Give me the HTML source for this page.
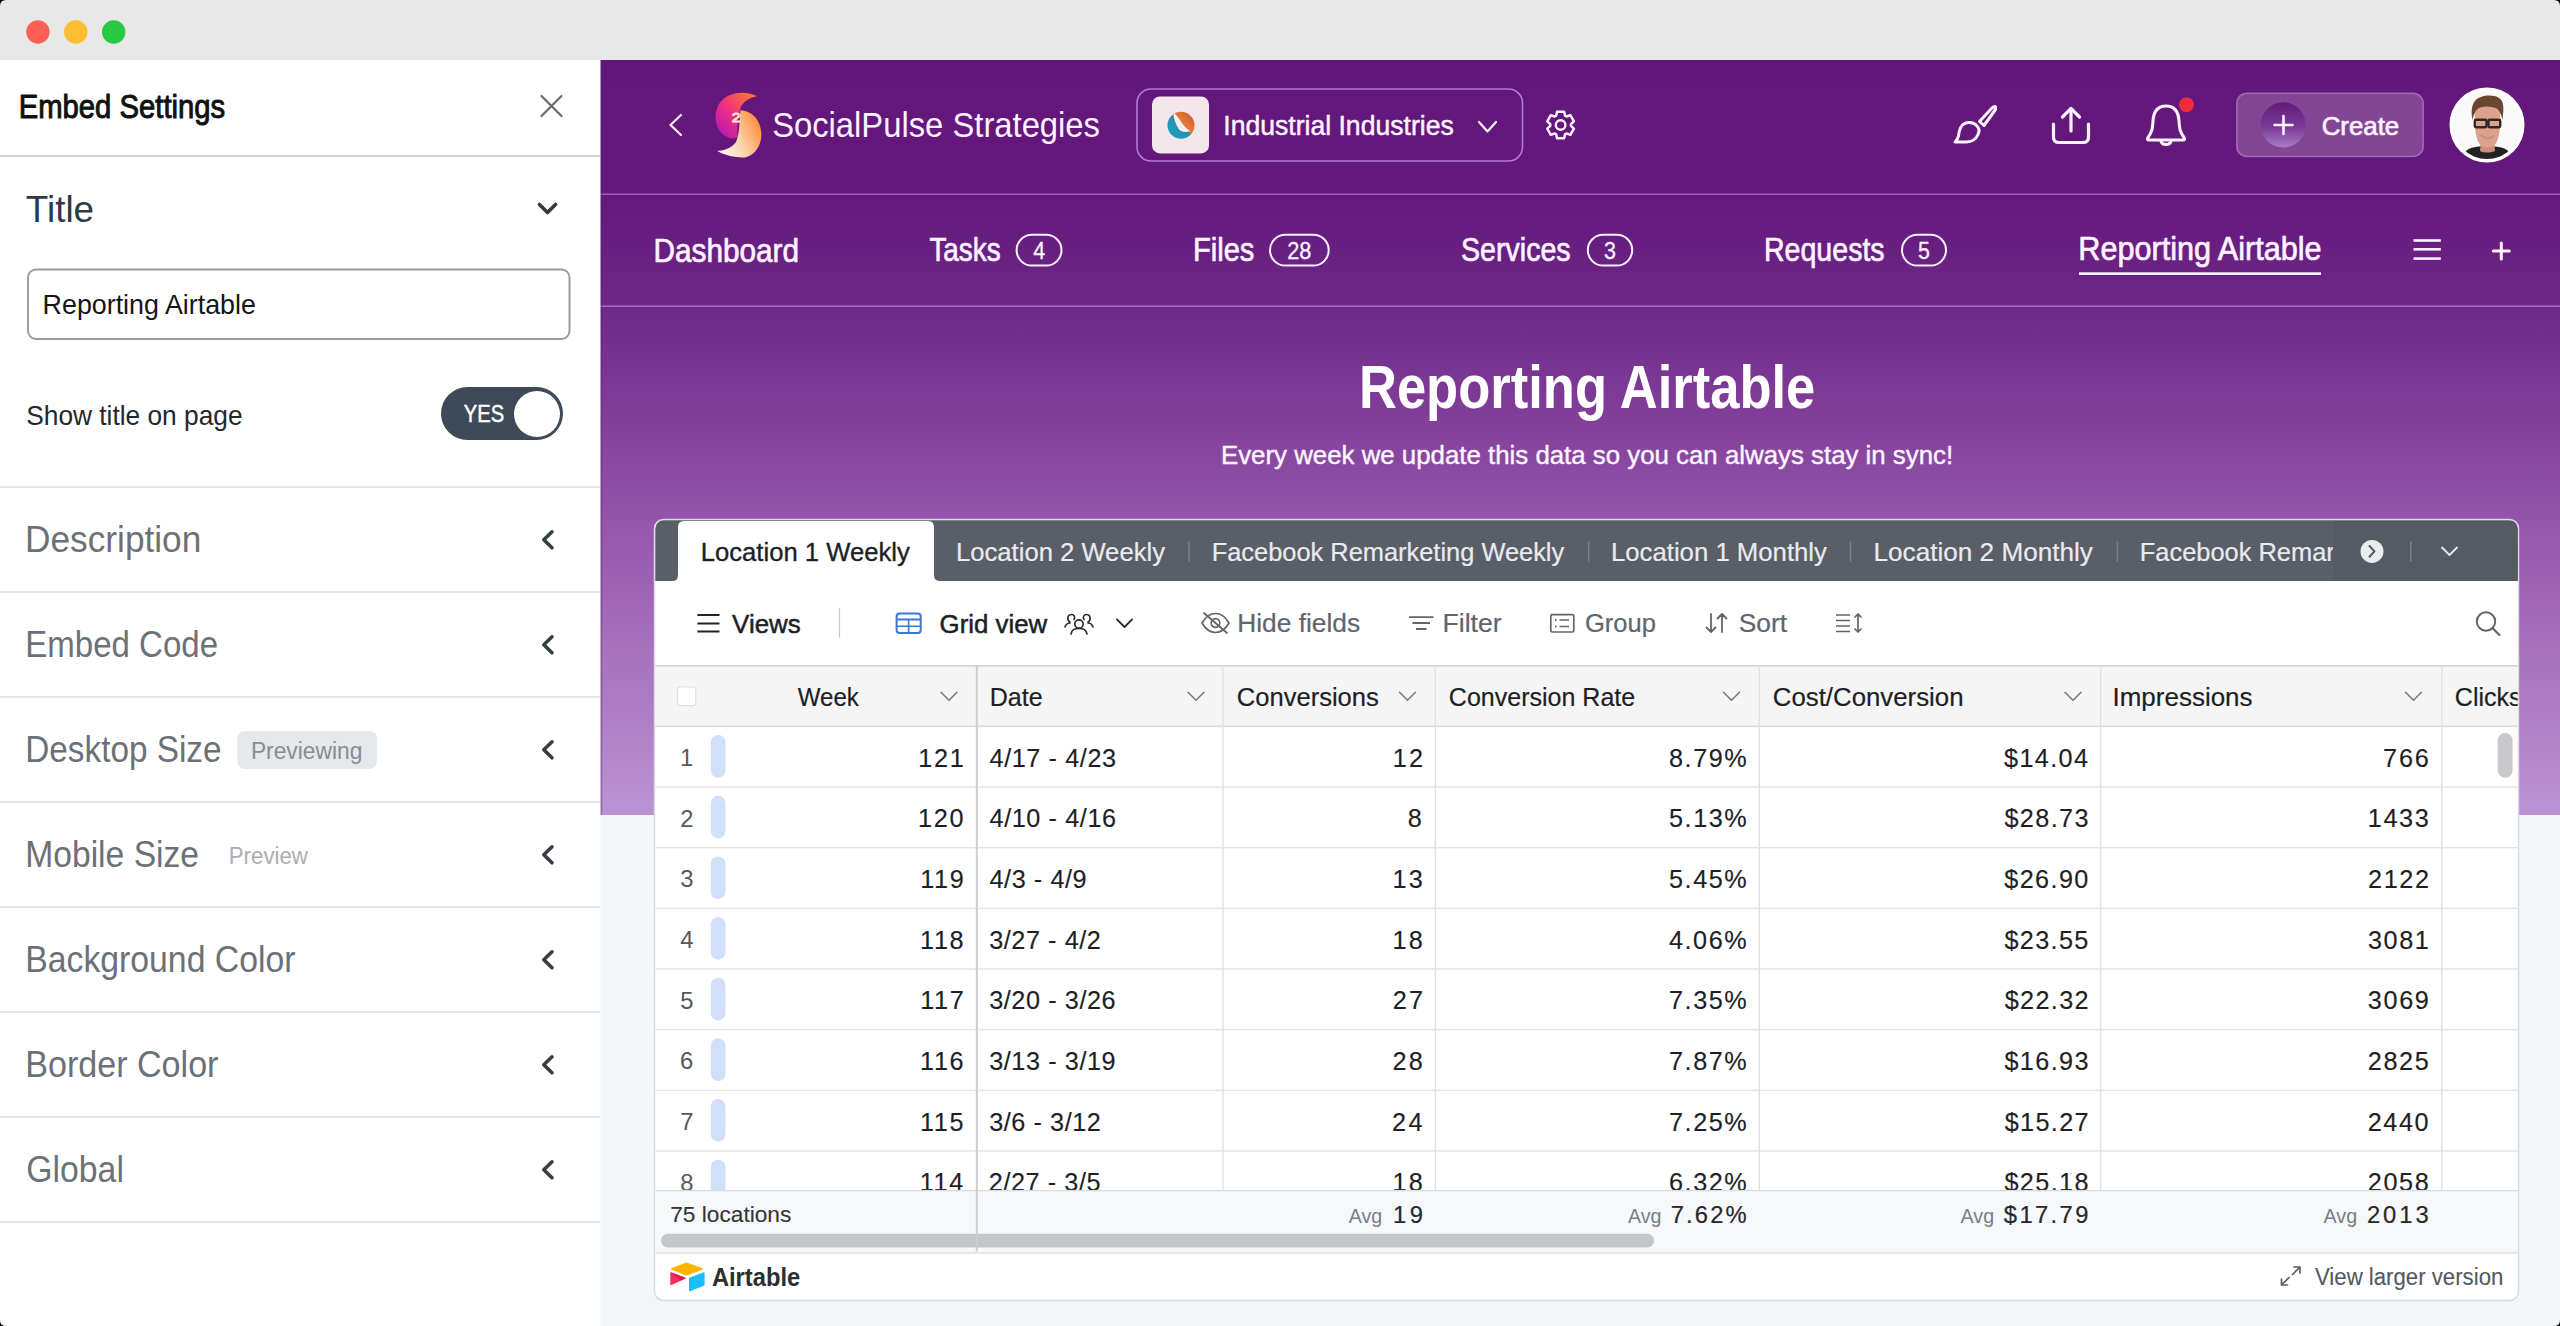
<!DOCTYPE html>
<html><head><meta charset="utf-8"><title>Embed Settings</title>
<style>html,body{margin:0;padding:0;width:2560px;height:1326px;overflow:hidden;background:#000}
svg{display:block;font-family:"Liberation Sans",sans-serif}</style></head>
<body><svg width="2560" height="1326" viewBox="0 0 2560 1326">
<defs><linearGradient id="pg" x1="0" y1="60" x2="0" y2="815" gradientUnits="userSpaceOnUse">
<stop offset="0" stop-color="#63177a"/>
<stop offset="0.18" stop-color="#64187b"/>
<stop offset="0.32" stop-color="#6d2787"/>
<stop offset="0.6" stop-color="#9353a9"/>
<stop offset="0.8" stop-color="#a874bf"/>
<stop offset="1" stop-color="#bb93d3"/>
</linearGradient>
<linearGradient id="lg1" x1="0" y1="0" x2="1" y2="1">
<stop offset="0" stop-color="#ff5a5f"/><stop offset="0.5" stop-color="#e0308a"/><stop offset="1" stop-color="#c51d9e"/></linearGradient>
<linearGradient id="lg2" x1="0" y1="1" x2="1" y2="0">
<stop offset="0" stop-color="#fff5ea"/><stop offset="0.55" stop-color="#f7c08a"/><stop offset="1" stop-color="#ff7a3a"/></linearGradient>
<linearGradient id="lg1b" x1="0.1" y1="0.9" x2="0.9" y2="0.1">
<stop offset="0" stop-color="#b81ab0"/><stop offset="0.45" stop-color="#ee2f82"/><stop offset="1" stop-color="#ff7038"/></linearGradient>
<linearGradient id="lg2b" x1="0" y1="0.8" x2="1" y2="0.3">
<stop offset="0" stop-color="#fff6f0"/><stop offset="0.45" stop-color="#fbd7b0"/><stop offset="1" stop-color="#ff8a3a"/></linearGradient>
<linearGradient id="og" x1="0" y1="1" x2="1" y2="0">
<stop offset="0" stop-color="#1aa3c8"/><stop offset="0.5" stop-color="#2a8fb0"/><stop offset="0.55" stop-color="#e8803a"/><stop offset="1" stop-color="#d0502a"/></linearGradient>
<linearGradient id="cg" x1="0" y1="0" x2="0" y2="1">
<stop offset="0" stop-color="#641a7c"/><stop offset="0.55" stop-color="#7a3a96"/><stop offset="1" stop-color="#a77cc9"/></linearGradient>
<clipPath id="avc"><circle cx="2487" cy="125" r="34"/></clipPath>
<clipPath id="boxc"><rect x="655.3" y="520.3" width="1862.4" height="779.4" rx="8.5"/></clipPath>
<clipPath id="fbc"><rect x="2130" y="520" width="203" height="61"/></clipPath>
<clipPath id="rowsc"><rect x="655" y="727" width="1864" height="463.6"/></clipPath></defs>
<rect x="0" y="0" width="2560" height="1326" rx="0" fill="#f5f6fa"/>
<rect x="0" y="0" width="2560" height="61" rx="0" fill="#e8e8e8"/>
<circle cx="37.9" cy="32" r="11.7" fill="#fe5f57"/>
<circle cx="75.8" cy="32" r="11.7" fill="#febc2e"/>
<circle cx="113.7" cy="32" r="11.7" fill="#28c840"/>
<rect x="600" y="60" width="1960" height="755" rx="0" fill="url(#pg)"/>
<rect x="600" y="193.5" width="1960" height="1.5" rx="0" fill="#a866c4" opacity="0.9"/>
<rect x="600" y="305.5" width="1960" height="1.5" rx="0" fill="#ad78c8" opacity="0.9"/>
<rect x="600" y="60" width="2.3" height="755" rx="0" fill="#4a2a5a" opacity="0.35"/>
<rect x="0" y="60" width="600.5" height="1266" rx="0" fill="#ffffff"/>
<text x="18.69" y="117.7" font-size="33.48" textLength="206.53" lengthAdjust="spacingAndGlyphs" fill="#111111" stroke="#111111" stroke-width="1" stroke-linejoin="round">Embed Settings</text>
<path d="M541.5 96 L561.5 116 M561.5 96 L541.5 116" fill="none" stroke="#6a6a6a" stroke-width="2.2" stroke-linecap="round" stroke-linejoin="round"/>
<rect x="0" y="155" width="600" height="2" rx="0" fill="#d2d2d2"/>
<text x="25.87" y="221.5" font-size="36.23" textLength="68.28" lengthAdjust="spacingAndGlyphs" fill="#2f3945">Title</text>
<path d="M539.5 204.5 L547.5 212.5 L555.5 204.5" fill="none" stroke="#33383d" stroke-width="3.6" stroke-linecap="round" stroke-linejoin="round"/>
<rect x="28" y="269.5" width="541.5" height="69.5" rx="8" fill="#ffffff" stroke="#9c9c9c" stroke-width="2"/>
<text x="42.59" y="314.2" font-size="27.54" textLength="213.31" lengthAdjust="spacingAndGlyphs" fill="#161616">Reporting Airtable</text>
<text x="26.22" y="425" font-size="27.54" textLength="216.32" lengthAdjust="spacingAndGlyphs" fill="#24282c">Show title on page</text>
<rect x="441" y="387" width="122" height="53" rx="26.5" fill="#3e4a57"/>
<circle cx="537" cy="414" r="23" fill="#ffffff"/>
<text x="463.8" y="422" font-size="24.35" textLength="40.33" lengthAdjust="spacingAndGlyphs" fill="#ffffff" stroke="#ffffff" stroke-width="0.5" stroke-linejoin="round">YES</text>
<rect x="0" y="486" width="600" height="2" rx="0" fill="#e4e5e7"/>
<rect x="0" y="591" width="600" height="2" rx="0" fill="#e4e5e7"/>
<rect x="0" y="696" width="600" height="2" rx="0" fill="#e4e5e7"/>
<rect x="0" y="801" width="600" height="2" rx="0" fill="#e4e5e7"/>
<rect x="0" y="906" width="600" height="2" rx="0" fill="#e4e5e7"/>
<rect x="0" y="1011" width="600" height="2" rx="0" fill="#e4e5e7"/>
<rect x="0" y="1116" width="600" height="2" rx="0" fill="#e4e5e7"/>
<rect x="0" y="1221" width="600" height="2" rx="0" fill="#e4e5e7"/>
<text x="25.09" y="552" font-size="36.23" textLength="176.18" lengthAdjust="spacingAndGlyphs" fill="#6b7177">Description</text>
<path d="M552 531.8 L543.8 539.8 L552 547.8" fill="none" stroke="#383e43" stroke-width="3.6" stroke-linecap="round" stroke-linejoin="round"/>
<text x="25.28" y="657" font-size="36.23" textLength="192.8" lengthAdjust="spacingAndGlyphs" fill="#6b7177">Embed Code</text>
<path d="M552 636.8 L543.8 644.8 L552 652.8" fill="none" stroke="#383e43" stroke-width="3.6" stroke-linecap="round" stroke-linejoin="round"/>
<text x="25.25" y="762" font-size="36.23" textLength="196.22" lengthAdjust="spacingAndGlyphs" fill="#6b7177">Desktop Size</text>
<path d="M552 741.8 L543.8 749.8 L552 757.8" fill="none" stroke="#383e43" stroke-width="3.6" stroke-linecap="round" stroke-linejoin="round"/>
<text x="25.23" y="867" font-size="36.23" textLength="173.86" lengthAdjust="spacingAndGlyphs" fill="#6b7177">Mobile Size</text>
<path d="M552 846.8 L543.8 854.8 L552 862.8" fill="none" stroke="#383e43" stroke-width="3.6" stroke-linecap="round" stroke-linejoin="round"/>
<text x="25.21" y="972" font-size="36.23" textLength="270.28" lengthAdjust="spacingAndGlyphs" fill="#6b7177">Background Color</text>
<path d="M552 951.8 L543.8 959.8 L552 967.8" fill="none" stroke="#383e43" stroke-width="3.6" stroke-linecap="round" stroke-linejoin="round"/>
<text x="25.19" y="1077" font-size="36.23" textLength="193.28" lengthAdjust="spacingAndGlyphs" fill="#6b7177">Border Color</text>
<path d="M552 1056.8 L543.8 1064.8 L552 1072.8" fill="none" stroke="#383e43" stroke-width="3.6" stroke-linecap="round" stroke-linejoin="round"/>
<text x="26.31" y="1182" font-size="36.23" textLength="97.59" lengthAdjust="spacingAndGlyphs" fill="#6b7177">Global</text>
<path d="M552 1161.8 L543.8 1169.8 L552 1177.8" fill="none" stroke="#383e43" stroke-width="3.6" stroke-linecap="round" stroke-linejoin="round"/>
<rect x="237.3" y="731.2" width="139.5" height="37.7" rx="7" fill="#e6e8eb"/>
<text x="250.92" y="758.6" font-size="23.62" textLength="111.43" lengthAdjust="spacingAndGlyphs" fill="#878d93">Previewing</text>
<text x="228.76" y="863.6" font-size="23.62" textLength="79.16" lengthAdjust="spacingAndGlyphs" fill="#a9aeb3">Preview</text>
<path d="M681 115 L670.5 125 L681 135" fill="none" stroke="#fdf2ff" stroke-width="2.2" stroke-linecap="round" stroke-linejoin="round"/>
<path d="M756.9 96.2 C748 91 728 90 719 104 C712 116 716 132 728 137.5 C732 139 736 138.5 737.6 137 C737 128 737.5 117 740.5 108 C743 102 749 97.5 756.9 96.2 Z" fill="url(#lg1b)" stroke="none" stroke-width="0" stroke-linecap="round" stroke-linejoin="round"/>
<path d="M740.6 110.3 C752 111 761 120 761.4 134 C761.5 148 752 157.5 743 157.5 C732 157.5 722 154 717.1 150.8 C724 151 732 148 736 142 C739.5 135 739.5 120 740.6 110.3 Z" fill="url(#lg2b)" stroke="none" stroke-width="0" stroke-linecap="round" stroke-linejoin="round"/>
<text x="731.68" y="122" font-size="13.04" textLength="9.17" lengthAdjust="spacingAndGlyphs" fill="none" stroke="#ffe6d6" stroke-width="0.9">2</text>
<text x="772.13" y="136.5" font-size="34.78" textLength="327.84" lengthAdjust="spacingAndGlyphs" fill="#fdf2ff">SocialPulse Strategies</text>
<rect x="1137" y="89" width="385.5" height="72" rx="14" fill="none" stroke="#b47ad0" stroke-width="1.6"/>
<rect x="1152" y="96.5" width="57" height="56.9" rx="8" fill="#f3e7ec"/>
<circle cx="1181" cy="125.3" r="13.5" fill="url(#og)"/>
<path d="M1174 113 C1180 118 1182 126 1190 131 C1186 133 1180 132 1178 128 C1175 122 1173 117 1174 113 Z" fill="#f6f0f2" stroke="none" stroke-width="0" stroke-linecap="round" stroke-linejoin="round"/>
<text x="1223.29" y="135" font-size="28.26" textLength="230.42" lengthAdjust="spacingAndGlyphs" fill="#fdf2ff" stroke="#fdf2ff" stroke-width="0.5" stroke-linejoin="round">Industrial Industries</text>
<path d="M1479 122 L1487.5 131.5 L1496 122" fill="none" stroke="#fdf2ff" stroke-width="2.2" stroke-linecap="round" stroke-linejoin="round"/>
<polygon points="1557.03 111.67 1564.17 111.67 1565 115.57 1566.57 116.48 1570.36 115.24 1573.93 121.43 1570.96 124.09 1570.96 125.91 1573.93 128.57 1570.36 134.76 1566.57 133.52 1565 134.43 1564.17 138.33 1557.03 138.33 1556.2 134.43 1554.63 133.52 1550.84 134.76 1547.27 128.57 1550.24 125.91 1550.24 124.09 1547.27 121.43 1550.84 115.24 1554.63 116.48 1556.2 115.57" fill="none" stroke="#fdf2ff" stroke-width="2.5" stroke-linejoin="round"/>
<circle cx="1560.6" cy="125" r="4.8" fill="none" stroke="#fdf2ff" stroke-width="2.4"/>
<path d="M1979.5 121.5 L1991.5 108.5 Q1996.5 104 1995.5 109.5 L1984 125.5 Z" fill="none" stroke="#fdf2ff" stroke-width="3" stroke-linecap="round" stroke-linejoin="round"/>
<path d="M1977 126 C1973 121.5 1966 121.5 1962.5 125 C1959 128.5 1959 133 1958.5 136 C1958 139 1956.5 140.5 1955 142 L1966.5 142 C1972 142 1976 139 1978 134.5 C1979.5 131.5 1979 128 1977 126 Z" fill="none" stroke="#fdf2ff" stroke-width="3" stroke-linecap="round" stroke-linejoin="round"/>
<path d="M2071 109 L2071 131" fill="none" stroke="#fdf2ff" stroke-width="3.2" stroke-linecap="round" stroke-linejoin="round"/>
<path d="M2062.5 117 L2071 108.5 L2079.5 117" fill="none" stroke="#fdf2ff" stroke-width="3.2" stroke-linecap="round" stroke-linejoin="round"/>
<path d="M2053.5 124 L2053.5 137 Q2053.5 142.5 2059 142.5 L2083 142.5 Q2088.5 142.5 2088.5 137 L2088.5 124" fill="none" stroke="#fdf2ff" stroke-width="3.2" stroke-linecap="round" stroke-linejoin="round"/>
<path d="M2166 106 C2157 106 2153.5 113 2153 121 C2152.5 129 2152 132 2148 137.5 C2147 139 2147.5 140 2149 140 L2183 140 C2184.5 140 2185 139 2184 137.5 C2180 132 2179.5 129 2179 121 C2178.5 113 2175 106 2166 106 Z" fill="none" stroke="#fdf2ff" stroke-width="3.1" stroke-linecap="round" stroke-linejoin="round"/>
<path d="M2161 141 C2161.5 145.5 2170.5 145.5 2171 141" fill="none" stroke="#fdf2ff" stroke-width="3" stroke-linecap="round" stroke-linejoin="round"/>
<circle cx="2186.5" cy="104.8" r="7.5" fill="#ef2b3c"/>
<rect x="2236.8" y="93.2" width="186.4" height="63.2" rx="10" fill="#ffffff" fill-opacity="0.2" stroke="#c89be0" stroke-opacity="0.55" stroke-width="1.5"/>
<circle cx="2283.2" cy="124.9" r="22.6" fill="url(#cg)"/>
<path d="M2283.5 116 L2283.5 134 M2274.5 125 L2292.5 125" fill="none" stroke="#fdf2ff" stroke-width="2.6" stroke-linecap="round" stroke-linejoin="round"/>
<text x="2321.66" y="134.6" font-size="26.38" textLength="77.53" lengthAdjust="spacingAndGlyphs" fill="#fdf2ff" stroke="#fdf2ff" stroke-width="0.7" stroke-linejoin="round">Create</text>
<circle cx="2487" cy="125" r="37" fill="#ffffff"/>
<g clip-path="url(#avc)">
<rect x="2450" y="88" width="74" height="74" rx="0" fill="#f9f9fa"/>
<path d="M2460 162 C2462 150 2470 146 2487 146 C2504 146 2512 150 2514 162 Z" fill="#222222" stroke="none" stroke-width="0" stroke-linecap="round" stroke-linejoin="round"/>
<path d="M2481 139 L2494 139 L2495 151 C2490 153 2484 153 2480 151 Z" fill="#c98f78" stroke="none" stroke-width="0" stroke-linecap="round" stroke-linejoin="round"/>
<path d="M2475 113 C2474 127 2476 140 2480 144.5 C2484 148.5 2491 148.5 2495 144.5 C2499 140 2501 127 2500 113 C2499 105 2494 102 2487.5 102 C2481 102 2476 105 2475 113 Z" fill="#dda28b" stroke="none" stroke-width="0" stroke-linecap="round" stroke-linejoin="round"/>
<path d="M2472.5 120 C2470 108 2473 99 2481 97 C2487 95 2494 95 2499 98 C2504 101 2504 108 2502.5 120 C2501 113 2499 110 2496 108 C2490 106 2484 106 2479 108 C2476 110 2474 113 2472.5 120 Z" fill="#6a4530" stroke="none" stroke-width="0" stroke-linecap="round" stroke-linejoin="round"/>
<rect x="2474.8" y="119.8" width="11.7" height="7.5" rx="1.2" fill="none" stroke="#2f2a28" stroke-width="2.4"/>
<rect x="2488.5" y="119.8" width="11.7" height="7.5" rx="1.2" fill="none" stroke="#2f2a28" stroke-width="2.4"/>
<line x1="2486.5" y1="121.5" x2="2488.5" y2="121.5" stroke="#2f2a28" stroke-width="2"/>
<path d="M2481.5 135.5 C2484.5 138.8 2490.5 138.8 2493.5 135.5 C2491.5 140 2483.5 140 2481.5 135.5 Z" fill="#ffffff" stroke="#a86a5a" stroke-width="0.7" stroke-linecap="round" stroke-linejoin="round"/>
</g>
<circle cx="2487" cy="125" r="36" fill="none" stroke="#ffffff" stroke-width="3"/>
<text x="653.49" y="261.9" font-size="33.33" textLength="145.58" lengthAdjust="spacingAndGlyphs" fill="#fdf2ff" stroke="#fdf2ff" stroke-width="0.7" stroke-linejoin="round">Dashboard</text>
<text x="929.42" y="261" font-size="33.33" textLength="71.24" lengthAdjust="spacingAndGlyphs" fill="#fdf2ff" stroke="#fdf2ff" stroke-width="0.7" stroke-linejoin="round">Tasks</text>
<rect x="1016.6" y="234.8" width="44.9" height="30.8" rx="15.4" fill="none" stroke="#fdf2ff" stroke-width="2"/>
<text x="1033.16" y="258.8" font-size="23.19" textLength="11.92" lengthAdjust="spacingAndGlyphs" fill="#fdf2ff" stroke="#fdf2ff" stroke-width="0.3" stroke-linejoin="round">4</text>
<text x="1192.95" y="261" font-size="33.33" textLength="61.49" lengthAdjust="spacingAndGlyphs" fill="#fdf2ff" stroke="#fdf2ff" stroke-width="0.7" stroke-linejoin="round">Files</text>
<rect x="1270" y="234.8" width="58.7" height="30.8" rx="15.4" fill="none" stroke="#fdf2ff" stroke-width="2"/>
<text x="1287.21" y="258.8" font-size="23.19" textLength="24.18" lengthAdjust="spacingAndGlyphs" fill="#fdf2ff" stroke="#fdf2ff" stroke-width="0.3" stroke-linejoin="round">28</text>
<text x="1461.06" y="261" font-size="33.33" textLength="109.57" lengthAdjust="spacingAndGlyphs" fill="#fdf2ff" stroke="#fdf2ff" stroke-width="0.7" stroke-linejoin="round">Services</text>
<rect x="1587.8" y="234.8" width="44.4" height="30.8" rx="15.4" fill="none" stroke="#fdf2ff" stroke-width="2"/>
<text x="1604.12" y="258.8" font-size="23.19" textLength="11.9" lengthAdjust="spacingAndGlyphs" fill="#fdf2ff" stroke="#fdf2ff" stroke-width="0.3" stroke-linejoin="round">3</text>
<text x="1763.99" y="261" font-size="33.33" textLength="120.65" lengthAdjust="spacingAndGlyphs" fill="#fdf2ff" stroke="#fdf2ff" stroke-width="0.7" stroke-linejoin="round">Requests</text>
<rect x="1902" y="234.8" width="44" height="30.8" rx="15.4" fill="none" stroke="#fdf2ff" stroke-width="2"/>
<text x="1918.06" y="258.8" font-size="23.19" textLength="11.9" lengthAdjust="spacingAndGlyphs" fill="#fdf2ff" stroke="#fdf2ff" stroke-width="0.3" stroke-linejoin="round">5</text>
<text x="2078.33" y="260" font-size="33.33" textLength="243.19" lengthAdjust="spacingAndGlyphs" fill="#fdf2ff" stroke="#fdf2ff" stroke-width="0.7" stroke-linejoin="round">Reporting Airtable</text>
<rect x="2079" y="272.3" width="242" height="2.7" rx="0" fill="#fdf2ff"/>
<rect x="2413.5" y="239.2" width="27.3" height="2.6" rx="0" fill="#fdf2ff"/>
<rect x="2413.5" y="248" width="27.3" height="2.6" rx="0" fill="#fdf2ff"/>
<rect x="2413.5" y="257.3" width="27.3" height="2.6" rx="0" fill="#fdf2ff"/>
<path d="M2501.3 243 L2501.3 259 M2493.3 251 L2509.3 251" fill="none" stroke="#fdf2ff" stroke-width="3" stroke-linecap="round" stroke-linejoin="round" stroke-linecap="butt"/>
<text x="1358.95" y="408.4" font-size="60.87" textLength="456.4" lengthAdjust="spacingAndGlyphs" fill="#ffffff" font-weight="700">Reporting Airtable</text>
<text x="1220.97" y="464.2" font-size="26.38" textLength="732.18" lengthAdjust="spacingAndGlyphs" fill="#fdf4ff" stroke="#fdf4ff" stroke-width="0.4" stroke-linejoin="round">Every week we update this data so you can always stay in sync!</text>
<rect x="654.5" y="519.5" width="1864" height="781" rx="9" fill="#ffffff" stroke="#dcd8e4" stroke-width="1.5"/>
<g clip-path="url(#boxc)">
<rect x="655" y="520" width="1864" height="61" rx="0" fill="#595e67"/>
<path d="M672 581 Q678 581 678 575 L678 527 Q678 521 684 521 L928 521 Q934 521 934 527 L934 575 Q934 581 940 581 Z" fill="#ffffff" stroke="none" stroke-width="0" stroke-linecap="round" stroke-linejoin="round"/>
<text x="700.66" y="560.5" font-size="25.36" textLength="209.25" lengthAdjust="spacingAndGlyphs" fill="#1d1f25" stroke="#1d1f25" stroke-width="0.35" stroke-linejoin="round">Location 1 Weekly</text>
<text x="955.99" y="560.5" font-size="25.36" textLength="208.99" lengthAdjust="spacingAndGlyphs" fill="#e9ebef" stroke="#e9ebef" stroke-width="0.2" stroke-linejoin="round">Location 2 Weekly</text>
<text x="1211.7" y="560.5" font-size="25.36" textLength="352.54" lengthAdjust="spacingAndGlyphs" fill="#e9ebef" stroke="#e9ebef" stroke-width="0.2" stroke-linejoin="round">Facebook Remarketing Weekly</text>
<text x="1610.98" y="560.5" font-size="25.36" textLength="215.97" lengthAdjust="spacingAndGlyphs" fill="#e9ebef" stroke="#e9ebef" stroke-width="0.2" stroke-linejoin="round">Location 1 Monthly</text>
<text x="1873.54" y="560.5" font-size="25.36" textLength="219.4" lengthAdjust="spacingAndGlyphs" fill="#e9ebef" stroke="#e9ebef" stroke-width="0.2" stroke-linejoin="round">Location 2 Monthly</text>
<rect x="1188.25" y="541" width="1.5" height="21" rx="0" fill="#7c8088"/>
<rect x="1587.85" y="541" width="1.5" height="21" rx="0" fill="#7c8088"/>
<rect x="1849.75" y="541" width="1.5" height="21" rx="0" fill="#7c8088"/>
<rect x="2116.65" y="541" width="1.5" height="21" rx="0" fill="#7c8088"/>
<g clip-path="url(#fbc)">
<text x="2139.8" y="560.5" font-size="25.36" textLength="352.74" lengthAdjust="spacingAndGlyphs" fill="#e9ebef" stroke="#e9ebef" stroke-width="0.2" stroke-linejoin="round">Facebook Remarketing Weekly</text>
</g>
<rect x="2333" y="521" width="186" height="60" rx="0" fill="#555a63"/>
<rect x="2410" y="541" width="1.5" height="21" rx="0" fill="#7c8088"/>
<circle cx="2372" cy="551.4" r="11.5" fill="#e9ebef"/>
<path d="M2369.5 546 L2374.5 551.4 L2369.5 556.8" fill="none" stroke="#555a63" stroke-width="2" stroke-linecap="round" stroke-linejoin="round"/>
<path d="M2442 547.5 L2449.5 555 L2457 547.5" fill="none" stroke="#e9ebef" stroke-width="1.8" stroke-linecap="round" stroke-linejoin="round"/>
<rect x="697.4" y="614" width="22.1" height="2" rx="0" fill="#222428"/>
<rect x="697.4" y="622.5" width="22.1" height="2" rx="0" fill="#222428"/>
<rect x="697.4" y="630.5" width="22.1" height="2" rx="0" fill="#222428"/>
<text x="732.12" y="632.8" font-size="25.51" textLength="68.52" lengthAdjust="spacingAndGlyphs" fill="#1d1f25" stroke="#1d1f25" stroke-width="0.5" stroke-linejoin="round">Views</text>
<rect x="838.9" y="608" width="1.2" height="29.6" rx="0" fill="#c9cacd"/>
<rect x="896.6" y="613.5" width="24.1" height="19.5" rx="3" fill="none" stroke="#3a78d6" stroke-width="2"/>
<line x1="896.6" y1="619.5" x2="920.7" y2="619.5" stroke="#3a78d6" stroke-width="2"/>
<line x1="896.6" y1="626.3" x2="920.7" y2="626.3" stroke="#3a78d6" stroke-width="1.6"/>
<line x1="908.6" y1="619.5" x2="908.6" y2="633" stroke="#3a78d6" stroke-width="1.6"/>
<text x="939.56" y="632.8" font-size="25.51" textLength="107.63" lengthAdjust="spacingAndGlyphs" fill="#1d1f25" stroke="#1d1f25" stroke-width="0.5" stroke-linejoin="round">Grid view</text>
<circle cx="1079" cy="624" r="4.2" fill="none" stroke="#2a2c30" stroke-width="1.7"/>
<path d="M1071 634 C1072 629 1075 628.5 1079 628.5 C1083 628.5 1086 629 1087 634" fill="none" stroke="#2a2c30" stroke-width="1.7" stroke-linecap="round" stroke-linejoin="round"/>
<path d="M1070 622 C1067 621 1067 615 1071 614.5 C1074 614 1075.5 617 1074 619.5 M1065 627 C1066 624 1068 623 1070 623" fill="none" stroke="#2a2c30" stroke-width="1.6" stroke-linecap="round" stroke-linejoin="round"/>
<path d="M1088 622 C1091 621 1091 615 1087 614.5 C1084 614 1082.5 617 1084 619.5 M1093 627 C1092 624 1090 623 1088 623" fill="none" stroke="#2a2c30" stroke-width="1.6" stroke-linecap="round" stroke-linejoin="round"/>
<path d="M1117 619.5 L1124.5 627 L1132 619.5" fill="none" stroke="#2a2c30" stroke-width="1.8" stroke-linecap="round" stroke-linejoin="round"/>
<path d="M1202 623 C1206 616 1211 613.5 1215.5 613.5 C1220 613.5 1225 616 1229 623 C1225 630 1220 632.5 1215.5 632.5 C1211 632.5 1206 630 1202 623 Z" fill="none" stroke="#60656c" stroke-width="1.7" stroke-linecap="round" stroke-linejoin="round"/>
<circle cx="1215.5" cy="623" r="4.3" fill="none" stroke="#60656c" stroke-width="1.7"/>
<path d="M1204 613 L1227 633" fill="none" stroke="#60656c" stroke-width="1.8" stroke-linecap="round" stroke-linejoin="round"/>
<text x="1237.23" y="632.3" font-size="25.51" textLength="122.87" lengthAdjust="spacingAndGlyphs" fill="#60656c" stroke="#60656c" stroke-width="0.2" stroke-linejoin="round">Hide fields</text>
<line x1="1409" y1="617.2" x2="1433.5" y2="617.2" stroke="#60656c" stroke-width="1.8"/>
<line x1="1412.5" y1="623" x2="1430" y2="623" stroke="#60656c" stroke-width="1.8"/>
<line x1="1416" y1="629" x2="1426.5" y2="629" stroke="#60656c" stroke-width="1.8"/>
<text x="1442.61" y="632.3" font-size="25.51" textLength="58.98" lengthAdjust="spacingAndGlyphs" fill="#60656c" stroke="#60656c" stroke-width="0.2" stroke-linejoin="round">Filter</text>
<rect x="1550.8" y="614.6" width="23" height="17.4" rx="1.5" fill="none" stroke="#60656c" stroke-width="1.7"/>
<line x1="1555" y1="620" x2="1556.5" y2="620" stroke="#60656c" stroke-width="1.8"/>
<line x1="1559.5" y1="620" x2="1569" y2="620" stroke="#60656c" stroke-width="1.6"/>
<line x1="1555" y1="626.5" x2="1556.5" y2="626.5" stroke="#60656c" stroke-width="1.8"/>
<line x1="1559.5" y1="626.5" x2="1569" y2="626.5" stroke="#60656c" stroke-width="1.6"/>
<text x="1585.02" y="632.3" font-size="25.51" textLength="70.95" lengthAdjust="spacingAndGlyphs" fill="#60656c" stroke="#60656c" stroke-width="0.2" stroke-linejoin="round">Group</text>
<path d="M1711 614 L1711 632 M1706.5 627.5 L1711 632 L1715.5 627.5 M1722 632 L1722 614 M1717.5 618.5 L1722 614 L1726.5 618.5" fill="none" stroke="#60656c" stroke-width="1.8" stroke-linecap="round" stroke-linejoin="round"/>
<text x="1738.81" y="632.3" font-size="25.51" textLength="48.32" lengthAdjust="spacingAndGlyphs" fill="#60656c" stroke="#60656c" stroke-width="0.2" stroke-linejoin="round">Sort</text>
<line x1="1836" y1="615" x2="1850" y2="615" stroke="#60656c" stroke-width="1.7"/>
<line x1="1836" y1="620.5" x2="1850" y2="620.5" stroke="#60656c" stroke-width="1.7"/>
<line x1="1836" y1="626" x2="1850" y2="626" stroke="#60656c" stroke-width="1.7"/>
<line x1="1836" y1="631.5" x2="1850" y2="631.5" stroke="#60656c" stroke-width="1.7"/>
<path d="M1858 614 L1858 632 M1855 617 L1858 614 L1861 617 M1855 629 L1858 632 L1861 629" fill="none" stroke="#60656c" stroke-width="1.7" stroke-linecap="round" stroke-linejoin="round"/>
<circle cx="2486" cy="621.5" r="9.2" fill="none" stroke="#60656c" stroke-width="2"/>
<path d="M2493 628.5 L2499.5 635" fill="none" stroke="#60656c" stroke-width="2.2" stroke-linecap="round" stroke-linejoin="round"/>
<rect x="655" y="665" width="1864" height="61.4" rx="0" fill="#f5f5f5"/>
<rect x="655" y="665" width="1864" height="1.6" rx="0" fill="#d2d2d4"/>
<rect x="655" y="725.6" width="1864" height="1.6" rx="0" fill="#d9d9db"/>
<rect x="677.5" y="687" width="18.3" height="18.6" rx="2.5" fill="#ffffff" stroke="#dedede" stroke-width="1.2"/>
<text x="797.68" y="705.6" font-size="25.8" textLength="61.24" lengthAdjust="spacingAndGlyphs" fill="#1d1f25" stroke="#1d1f25" stroke-width="0.2" stroke-linejoin="round">Week</text>
<text x="989.74" y="705.6" font-size="25.8" textLength="52.86" lengthAdjust="spacingAndGlyphs" fill="#1d1f25" stroke="#1d1f25" stroke-width="0.2" stroke-linejoin="round">Date</text>
<text x="1236.82" y="705.6" font-size="25.8" textLength="141.99" lengthAdjust="spacingAndGlyphs" fill="#1d1f25" stroke="#1d1f25" stroke-width="0.2" stroke-linejoin="round">Conversions</text>
<text x="1448.85" y="705.6" font-size="25.8" textLength="186.38" lengthAdjust="spacingAndGlyphs" fill="#1d1f25" stroke="#1d1f25" stroke-width="0.2" stroke-linejoin="round">Conversion Rate</text>
<text x="1772.81" y="705.6" font-size="25.8" textLength="190.76" lengthAdjust="spacingAndGlyphs" fill="#1d1f25" stroke="#1d1f25" stroke-width="0.2" stroke-linejoin="round">Cost/Conversion</text>
<text x="2112.5" y="705.6" font-size="25.8" textLength="140.03" lengthAdjust="spacingAndGlyphs" fill="#1d1f25" stroke="#1d1f25" stroke-width="0.2" stroke-linejoin="round">Impressions</text>
<text x="2454.85" y="705.6" font-size="25.8" textLength="66.73" lengthAdjust="spacingAndGlyphs" fill="#1d1f25" stroke="#1d1f25" stroke-width="0.2" stroke-linejoin="round">Clicks</text>
<path d="M941 692.3 L949 700.3 L957 692.3" fill="none" stroke="#76797e" stroke-width="1.5" stroke-linecap="round" stroke-linejoin="round"/>
<path d="M1188 692.3 L1196 700.3 L1204 692.3" fill="none" stroke="#76797e" stroke-width="1.5" stroke-linecap="round" stroke-linejoin="round"/>
<path d="M1399.5 692.3 L1407.5 700.3 L1415.5 692.3" fill="none" stroke="#76797e" stroke-width="1.5" stroke-linecap="round" stroke-linejoin="round"/>
<path d="M1723.5 692.3 L1731.5 700.3 L1739.5 692.3" fill="none" stroke="#76797e" stroke-width="1.5" stroke-linecap="round" stroke-linejoin="round"/>
<path d="M2065 692.3 L2073 700.3 L2081 692.3" fill="none" stroke="#76797e" stroke-width="1.5" stroke-linecap="round" stroke-linejoin="round"/>
<path d="M2405.5 692.3 L2413.5 700.3 L2421.5 692.3" fill="none" stroke="#76797e" stroke-width="1.5" stroke-linecap="round" stroke-linejoin="round"/>
<g clip-path="url(#rowsc)">
<rect x="655" y="786.35" width="1864" height="1.4" rx="0" fill="#e3e3e5"/>
<text x="679.88" y="766" font-size="23.77" textLength="13.22" lengthAdjust="spacingAndGlyphs" fill="#55585d">1</text>
<rect x="710.8" y="735.1" width="14.7" height="42.7" rx="7.3" fill="#d2dffa"/>
<text x="918.17" y="766.6" font-size="25.22" textLength="45.58" lengthAdjust="spacing" fill="#1d1f25" stroke="#1d1f25" stroke-width="0.15" stroke-linejoin="round">121</text>
<text x="989.51" y="766.6" font-size="25.22" textLength="126.52" lengthAdjust="spacing" fill="#1d1f25" stroke="#1d1f25" stroke-width="0.15" stroke-linejoin="round">4/17 - 4/23</text>
<text x="1392.76" y="766.6" font-size="25.22" textLength="30.29" lengthAdjust="spacing" fill="#1d1f25" stroke="#1d1f25" stroke-width="0.15" stroke-linejoin="round">12</text>
<text x="1668.99" y="766.6" font-size="25.22" textLength="77.77" lengthAdjust="spacing" fill="#1d1f25" stroke="#1d1f25" stroke-width="0.15" stroke-linejoin="round">8.79%</text>
<text x="2004.06" y="766.6" font-size="25.22" textLength="83.99" lengthAdjust="spacing" fill="#1d1f25" stroke="#1d1f25" stroke-width="0.15" stroke-linejoin="round">$14.04</text>
<text x="2383.07" y="766.6" font-size="25.22" textLength="45.65" lengthAdjust="spacing" fill="#1d1f25" stroke="#1d1f25" stroke-width="0.15" stroke-linejoin="round">766</text>
<rect x="655" y="847" width="1864" height="1.4" rx="0" fill="#e3e3e5"/>
<text x="680.2" y="826.65" font-size="23.77" textLength="13.22" lengthAdjust="spacingAndGlyphs" fill="#55585d">2</text>
<rect x="710.8" y="795.75" width="14.7" height="42.7" rx="7.3" fill="#d2dffa"/>
<text x="917.89" y="827.25" font-size="25.22" textLength="45.6" lengthAdjust="spacing" fill="#1d1f25" stroke="#1d1f25" stroke-width="0.15" stroke-linejoin="round">120</text>
<text x="989.51" y="827.25" font-size="25.22" textLength="126.52" lengthAdjust="spacing" fill="#1d1f25" stroke="#1d1f25" stroke-width="0.15" stroke-linejoin="round">4/10 - 4/16</text>
<text x="1407.73" y="827.25" font-size="25.22" textLength="15.09" lengthAdjust="spacing" fill="#1d1f25" stroke="#1d1f25" stroke-width="0.15" stroke-linejoin="round">8</text>
<text x="1668.98" y="827.25" font-size="25.22" textLength="77.77" lengthAdjust="spacing" fill="#1d1f25" stroke="#1d1f25" stroke-width="0.15" stroke-linejoin="round">5.13%</text>
<text x="2004.47" y="827.25" font-size="25.22" textLength="83.95" lengthAdjust="spacing" fill="#1d1f25" stroke="#1d1f25" stroke-width="0.15" stroke-linejoin="round">$28.73</text>
<text x="2367.87" y="827.25" font-size="25.22" textLength="60.88" lengthAdjust="spacing" fill="#1d1f25" stroke="#1d1f25" stroke-width="0.15" stroke-linejoin="round">1433</text>
<rect x="655" y="907.65" width="1864" height="1.4" rx="0" fill="#e3e3e5"/>
<text x="680.26" y="887.3" font-size="23.77" textLength="13.22" lengthAdjust="spacingAndGlyphs" fill="#55585d">3</text>
<rect x="710.8" y="856.4" width="14.7" height="42.7" rx="7.3" fill="#d2dffa"/>
<text x="920.16" y="887.9" font-size="25.22" textLength="43.55" lengthAdjust="spacing" fill="#1d1f25" stroke="#1d1f25" stroke-width="0.15" stroke-linejoin="round">119</text>
<text x="989.51" y="887.9" font-size="25.22" textLength="97.06" lengthAdjust="spacing" fill="#1d1f25" stroke="#1d1f25" stroke-width="0.15" stroke-linejoin="round">4/3 - 4/9</text>
<text x="1392.55" y="887.9" font-size="25.22" textLength="30.3" lengthAdjust="spacing" fill="#1d1f25" stroke="#1d1f25" stroke-width="0.15" stroke-linejoin="round">13</text>
<text x="1668.98" y="887.9" font-size="25.22" textLength="77.77" lengthAdjust="spacing" fill="#1d1f25" stroke="#1d1f25" stroke-width="0.15" stroke-linejoin="round">5.45%</text>
<text x="2004.34" y="887.9" font-size="25.22" textLength="83.96" lengthAdjust="spacing" fill="#1d1f25" stroke="#1d1f25" stroke-width="0.15" stroke-linejoin="round">$26.90</text>
<text x="2368.02" y="887.9" font-size="25.22" textLength="60.92" lengthAdjust="spacing" fill="#1d1f25" stroke="#1d1f25" stroke-width="0.15" stroke-linejoin="round">2122</text>
<rect x="655" y="968.3" width="1864" height="1.4" rx="0" fill="#e3e3e5"/>
<text x="680.26" y="947.95" font-size="23.77" textLength="13.22" lengthAdjust="spacingAndGlyphs" fill="#55585d">4</text>
<rect x="710.8" y="917.05" width="14.7" height="42.7" rx="7.3" fill="#d2dffa"/>
<text x="920.09" y="948.55" font-size="25.22" textLength="43.55" lengthAdjust="spacing" fill="#1d1f25" stroke="#1d1f25" stroke-width="0.15" stroke-linejoin="round">118</text>
<text x="989.13" y="948.55" font-size="25.22" textLength="111.77" lengthAdjust="spacing" fill="#1d1f25" stroke="#1d1f25" stroke-width="0.15" stroke-linejoin="round">3/27 - 4/2</text>
<text x="1392.55" y="948.55" font-size="25.22" textLength="30.3" lengthAdjust="spacing" fill="#1d1f25" stroke="#1d1f25" stroke-width="0.15" stroke-linejoin="round">18</text>
<text x="1668.94" y="948.55" font-size="25.22" textLength="77.81" lengthAdjust="spacing" fill="#1d1f25" stroke="#1d1f25" stroke-width="0.15" stroke-linejoin="round">4.06%</text>
<text x="2004.41" y="948.55" font-size="25.22" textLength="83.96" lengthAdjust="spacing" fill="#1d1f25" stroke="#1d1f25" stroke-width="0.15" stroke-linejoin="round">$23.55</text>
<text x="2367.93" y="948.55" font-size="25.22" textLength="60.95" lengthAdjust="spacing" fill="#1d1f25" stroke="#1d1f25" stroke-width="0.15" stroke-linejoin="round">3081</text>
<rect x="655" y="1028.95" width="1864" height="1.4" rx="0" fill="#e3e3e5"/>
<text x="680.2" y="1008.6" font-size="23.77" textLength="13.22" lengthAdjust="spacingAndGlyphs" fill="#55585d">5</text>
<rect x="710.8" y="977.7" width="14.7" height="42.7" rx="7.3" fill="#d2dffa"/>
<text x="920.3" y="1009.2" font-size="25.22" textLength="43.53" lengthAdjust="spacing" fill="#1d1f25" stroke="#1d1f25" stroke-width="0.15" stroke-linejoin="round">117</text>
<text x="989.13" y="1009.2" font-size="25.22" textLength="126.5" lengthAdjust="spacing" fill="#1d1f25" stroke="#1d1f25" stroke-width="0.15" stroke-linejoin="round">3/20 - 3/26</text>
<text x="1392.7" y="1009.2" font-size="25.22" textLength="30.34" lengthAdjust="spacing" fill="#1d1f25" stroke="#1d1f25" stroke-width="0.15" stroke-linejoin="round">27</text>
<text x="1669.01" y="1009.2" font-size="25.22" textLength="77.75" lengthAdjust="spacing" fill="#1d1f25" stroke="#1d1f25" stroke-width="0.15" stroke-linejoin="round">7.35%</text>
<text x="2004.68" y="1009.2" font-size="25.22" textLength="83.94" lengthAdjust="spacing" fill="#1d1f25" stroke="#1d1f25" stroke-width="0.15" stroke-linejoin="round">$22.32</text>
<text x="2367.86" y="1009.2" font-size="25.22" textLength="60.96" lengthAdjust="spacing" fill="#1d1f25" stroke="#1d1f25" stroke-width="0.15" stroke-linejoin="round">3069</text>
<rect x="655" y="1089.6" width="1864" height="1.4" rx="0" fill="#e3e3e5"/>
<text x="680.12" y="1069.25" font-size="23.77" textLength="13.22" lengthAdjust="spacingAndGlyphs" fill="#55585d">6</text>
<rect x="710.8" y="1038.35" width="14.7" height="42.7" rx="7.3" fill="#d2dffa"/>
<text x="920.09" y="1069.85" font-size="25.22" textLength="43.55" lengthAdjust="spacing" fill="#1d1f25" stroke="#1d1f25" stroke-width="0.15" stroke-linejoin="round">116</text>
<text x="989.13" y="1069.85" font-size="25.22" textLength="126.5" lengthAdjust="spacing" fill="#1d1f25" stroke="#1d1f25" stroke-width="0.15" stroke-linejoin="round">3/13 - 3/19</text>
<text x="1392.5" y="1069.85" font-size="25.22" textLength="30.36" lengthAdjust="spacing" fill="#1d1f25" stroke="#1d1f25" stroke-width="0.15" stroke-linejoin="round">28</text>
<text x="1669.01" y="1069.85" font-size="25.22" textLength="77.75" lengthAdjust="spacing" fill="#1d1f25" stroke="#1d1f25" stroke-width="0.15" stroke-linejoin="round">7.87%</text>
<text x="2004.47" y="1069.85" font-size="25.22" textLength="83.95" lengthAdjust="spacing" fill="#1d1f25" stroke="#1d1f25" stroke-width="0.15" stroke-linejoin="round">$16.93</text>
<text x="2367.75" y="1069.85" font-size="25.22" textLength="60.94" lengthAdjust="spacing" fill="#1d1f25" stroke="#1d1f25" stroke-width="0.15" stroke-linejoin="round">2825</text>
<rect x="655" y="1150.25" width="1864" height="1.4" rx="0" fill="#e3e3e5"/>
<text x="680.2" y="1129.9" font-size="23.77" textLength="13.22" lengthAdjust="spacingAndGlyphs" fill="#55585d">7</text>
<rect x="710.8" y="1099" width="14.7" height="42.7" rx="7.3" fill="#d2dffa"/>
<text x="920.02" y="1130.5" font-size="25.22" textLength="43.56" lengthAdjust="spacing" fill="#1d1f25" stroke="#1d1f25" stroke-width="0.15" stroke-linejoin="round">115</text>
<text x="989.13" y="1130.5" font-size="25.22" textLength="111.77" lengthAdjust="spacing" fill="#1d1f25" stroke="#1d1f25" stroke-width="0.15" stroke-linejoin="round">3/6 - 3/12</text>
<text x="1392.08" y="1130.5" font-size="25.22" textLength="30.39" lengthAdjust="spacing" fill="#1d1f25" stroke="#1d1f25" stroke-width="0.15" stroke-linejoin="round">24</text>
<text x="1669.01" y="1130.5" font-size="25.22" textLength="77.75" lengthAdjust="spacing" fill="#1d1f25" stroke="#1d1f25" stroke-width="0.15" stroke-linejoin="round">7.25%</text>
<text x="2004.68" y="1130.5" font-size="25.22" textLength="83.94" lengthAdjust="spacing" fill="#1d1f25" stroke="#1d1f25" stroke-width="0.15" stroke-linejoin="round">$15.27</text>
<text x="2367.68" y="1130.5" font-size="25.22" textLength="60.95" lengthAdjust="spacing" fill="#1d1f25" stroke="#1d1f25" stroke-width="0.15" stroke-linejoin="round">2440</text>
<text x="680.2" y="1190.55" font-size="23.77" textLength="13.22" lengthAdjust="spacingAndGlyphs" fill="#55585d">8</text>
<rect x="710.8" y="1159.65" width="14.7" height="42.7" rx="7.3" fill="#d2dffa"/>
<text x="919.68" y="1191.15" font-size="25.22" textLength="43.59" lengthAdjust="spacing" fill="#1d1f25" stroke="#1d1f25" stroke-width="0.15" stroke-linejoin="round">114</text>
<text x="988.81" y="1191.15" font-size="25.22" textLength="111.76" lengthAdjust="spacing" fill="#1d1f25" stroke="#1d1f25" stroke-width="0.15" stroke-linejoin="round">2/27 - 3/5</text>
<text x="1392.55" y="1191.15" font-size="25.22" textLength="30.3" lengthAdjust="spacing" fill="#1d1f25" stroke="#1d1f25" stroke-width="0.15" stroke-linejoin="round">18</text>
<text x="1669.01" y="1191.15" font-size="25.22" textLength="77.75" lengthAdjust="spacing" fill="#1d1f25" stroke="#1d1f25" stroke-width="0.15" stroke-linejoin="round">6.32%</text>
<text x="2004.47" y="1191.15" font-size="25.22" textLength="83.95" lengthAdjust="spacing" fill="#1d1f25" stroke="#1d1f25" stroke-width="0.15" stroke-linejoin="round">$25.18</text>
<text x="2367.82" y="1191.15" font-size="25.22" textLength="60.93" lengthAdjust="spacing" fill="#1d1f25" stroke="#1d1f25" stroke-width="0.15" stroke-linejoin="round">2058</text>
</g>
<rect x="1222.3" y="665" width="1.4" height="525.6" rx="0" fill="#e1e1e3"/>
<rect x="1434.6" y="665" width="1.4" height="525.6" rx="0" fill="#e1e1e3"/>
<rect x="1758.6" y="665" width="1.4" height="525.6" rx="0" fill="#e1e1e3"/>
<rect x="2099.9" y="665" width="1.4" height="525.6" rx="0" fill="#e1e1e3"/>
<rect x="2441.1" y="665" width="1.4" height="525.6" rx="0" fill="#e1e1e3"/>
<rect x="2497.7" y="733" width="14.9" height="44.7" rx="7.4" fill="#c9c9cb"/>
<rect x="655" y="1190.6" width="1864" height="62.4" rx="0" fill="#f7f8fa"/>
<rect x="655" y="1189.9" width="1864" height="1.4" rx="0" fill="#dcdcde"/>
<text x="670.22" y="1222" font-size="22.61" textLength="121.12" lengthAdjust="spacingAndGlyphs" fill="#333438" stroke="#333438" stroke-width="0.1" stroke-linejoin="round">75 locations</text>
<text x="1348.75" y="1222.5" font-size="20.29" textLength="33.56" lengthAdjust="spacingAndGlyphs" fill="#7a7d83">Avg</text>
<text x="1393.02" y="1222.5" font-size="23.77" textLength="30.01" lengthAdjust="spacing" fill="#26282c" stroke="#26282c" stroke-width="0.2" stroke-linejoin="round">19</text>
<text x="1627.95" y="1222.5" font-size="20.29" textLength="33.56" lengthAdjust="spacingAndGlyphs" fill="#7a7d83">Avg</text>
<text x="1670.71" y="1222.5" font-size="23.77" textLength="75.97" lengthAdjust="spacing" fill="#26282c" stroke="#26282c" stroke-width="0.2" stroke-linejoin="round">7.62%</text>
<text x="1960.55" y="1222.5" font-size="20.29" textLength="33.56" lengthAdjust="spacingAndGlyphs" fill="#7a7d83">Avg</text>
<text x="2003.86" y="1222.5" font-size="23.77" textLength="84.54" lengthAdjust="spacing" fill="#26282c" stroke="#26282c" stroke-width="0.2" stroke-linejoin="round">$17.79</text>
<text x="2323.55" y="1222.5" font-size="20.29" textLength="33.56" lengthAdjust="spacingAndGlyphs" fill="#7a7d83">Avg</text>
<text x="2366.91" y="1222.5" font-size="23.77" textLength="61.75" lengthAdjust="spacing" fill="#26282c" stroke="#26282c" stroke-width="0.2" stroke-linejoin="round">2013</text>
<rect x="661" y="1233.8" width="993" height="13.7" rx="6.9" fill="#c5c6c9"/>
<rect x="975.8" y="665" width="2" height="586.5" rx="0" fill="#cdcdcf"/>
<rect x="655" y="1252.3" width="1864" height="1.4" rx="0" fill="#dedfe2"/>
</g>
<path d="M687.5 1262.8 L702.5 1268.3 C703.3 1268.6 703.3 1269.4 702.5 1269.7 L687.5 1275.2 C686.8 1275.4 686.2 1275.4 685.5 1275.2 L671.5 1269.7 C670.8 1269.4 670.8 1268.6 671.5 1268.3 L685.5 1262.8 C686.2 1262.6 686.8 1262.6 687.5 1262.8 Z" fill="#fcb400" stroke="none" stroke-width="0" stroke-linecap="round" stroke-linejoin="round"/>
<path d="M689.5 1277.8 L703.5 1272.3 C704 1272.1 704.6 1272.5 704.6 1273 L704.6 1284.5 C704.6 1285.1 704.3 1285.5 703.8 1285.7 L690 1291.2 C689.5 1291.4 689 1291 689 1290.5 L689 1278.5 C689 1278.2 689.2 1277.9 689.5 1277.8 Z" fill="#18bfff" stroke="none" stroke-width="0" stroke-linecap="round" stroke-linejoin="round"/>
<path d="M685.5 1278.4 L680.8 1280.7 L671.4 1285.1 C670.9 1285.4 670.3 1285 670.3 1284.4 L670.3 1272.8 C670.3 1272.5 670.5 1272.3 670.7 1272.2 C670.8 1272.1 671 1272.1 671.2 1272.2 L685.4 1277.8 C685.7 1278 685.8 1278.3 685.5 1278.4 Z" fill="#f82b60" stroke="none" stroke-width="0" stroke-linecap="round" stroke-linejoin="round"/>
<path d="M685.5 1278.4 L681 1280.6 L670.9 1272.1 C671 1272.1 671.1 1272.1 671.2 1272.2 L685.4 1277.8 C685.7 1278 685.8 1278.3 685.5 1278.4 Z" fill="#c20e3a" stroke="none" stroke-width="0" stroke-linecap="round" stroke-linejoin="round" opacity="0.6"/>
<text x="711.91" y="1286" font-size="26.09" textLength="88.28" lengthAdjust="spacingAndGlyphs" fill="#2c2e33" font-weight="700">Airtable</text>
<path d="M2281.5 1285 L2289 1277.5 M2281.5 1279 L2281.5 1285 L2287.5 1285 M2300 1267 L2292.5 1274.5 M2294 1267 L2300 1267 L2300 1273" fill="none" stroke="#5b5e63" stroke-width="1.7" stroke-linecap="round" stroke-linejoin="round"/>
<text x="2314.94" y="1285.2" font-size="23.91" textLength="188.41" lengthAdjust="spacingAndGlyphs" fill="#55585d" stroke="#55585d" stroke-width="0.1" stroke-linejoin="round">View larger version</text>
<path d="M0 0 L6 0 Q0 0 0 6 Z" fill="#000000" stroke="none" stroke-width="0" stroke-linecap="round" stroke-linejoin="round"/>
<path d="M2560 0 L2554 0 Q2560 0 2560 6 Z" fill="#000000" stroke="none" stroke-width="0" stroke-linecap="round" stroke-linejoin="round"/>
<path d="M0 1326 L0 1320 Q0 1326 6 1326 Z" fill="#000000" stroke="none" stroke-width="0" stroke-linecap="round" stroke-linejoin="round"/>
<path d="M2560 1326 L2554 1326 Q2560 1326 2560 1320 Z" fill="#000000" stroke="none" stroke-width="0" stroke-linecap="round" stroke-linejoin="round"/>
</svg></body></html>
